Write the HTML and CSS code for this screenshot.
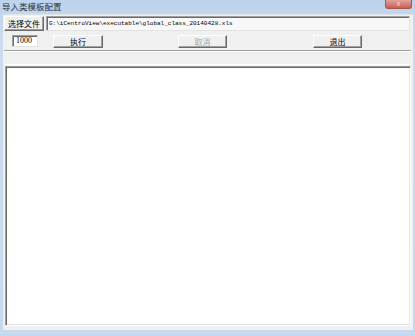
FILE: index.html
```html
<!DOCTYPE html>
<html lang="zh-CN">
<head>
  <meta charset="UTF-8" />
  <title>导入类模板配置</title>
  <link rel="stylesheet" href="styles.css">
</head>
<body>
  <div class="window">
    <div class="titlebar">
      <span class="title">导入类模板配置</span>
      <span class="close">x</span>
    </div>

    <div class="client">
      <div class="row row-file">
        <button class="btn btn-pick">选择文件</button>
        <div class="edit edit-path">G:\iCentroView\executable\global_class_20140428.xls</div>
      </div>

      <div class="row row-actions">
        <div class="edit edit-count">1000</div>
        <button class="btn btn-run">执行</button>
        <button class="btn btn-cancel" disabled>取消</button>
        <button class="btn btn-exit">退出</button>
      </div>

      <div class="status"></div>

      <div class="listbox"></div>
    </div>
  </div>
</body>
</html>
```

FILE: styles.css
```css
body {
  margin: 0;
  font-family: "Noto Sans CJK SC", "Liberation Sans", sans-serif;
}

.window {
  width: 415px;
  height: 336px;
  background: linear-gradient(#bdd3ec, #cbdcef 40px, #c6d9ee);
  display: flex;
  flex-direction: column;
  overflow: hidden;
}

.titlebar {
  height: 14px;
  display: flex;
  align-items: flex-start;
}

.title {
  font-size: 8.5px;
  line-height: 12px;
  color: #28323e;
  margin-left: 2px;
}

.close {
  margin-left: auto;
  margin-right: 3px;
  width: 27px;
  height: 9px;
  background: linear-gradient(#e3a39b, #c85e52);
  border: 1px solid #a4554f;
  border-top: none;
  border-radius: 0 0 3px 3px;
  color: #f6dcdc;
  font-family: "Liberation Sans", sans-serif;
  font-size: 7px;
  line-height: 8px;
  text-align: center;
  box-sizing: border-box;
}

.client {
  flex: 1;
  margin: 0 2px 6px 3px;
  background: #f0f0f0;
  border-top: 1px solid #dfe3e8;
  display: flex;
  flex-direction: column;
}

.row {
  display: flex;
  align-items: flex-start;
}

.row-file {
  margin-top: 1px;
  height: 15px;
}

.row-actions {
  margin-top: 4px;
  height: 14px;
}

.btn {
  padding: 0;
  margin: 0;
  background: #f0f0f0;
  border: 1px solid;
  border-color: #ffffff #696969 #696969 #ffffff;
  box-shadow: inset -1px -1px 0 #a0a0a0;
  font-family: "Noto Sans CJK SC", sans-serif;
  font-size: 8px;
  line-height: 11px;
  color: #000;
  box-sizing: border-box;
}

.btn:disabled {
  color: #a8a8a8;
}

.btn-pick {
  margin-left: 1px;
  width: 40px;
  height: 15px;
}

.btn-run {
  margin-left: 15px;
  width: 50px;
  height: 13px;
}

.btn-cancel {
  margin-left: 75px;
  width: 49px;
  height: 13px;
}

.btn-exit {
  margin-left: 86px;
  width: 49px;
  height: 13px;
}

.edit {
  background: #fff;
  border: 1px solid;
  border-color: #a0a0a0 #e3e3e3 #e3e3e3 #a0a0a0;
  box-shadow: inset 1px 1px 0 #696969;
  box-sizing: border-box;
  white-space: nowrap;
  overflow: hidden;
}

.edit-path {
  margin-left: 2px;
  width: 364px;
  height: 15px;
  font-family: "Liberation Mono", monospace;
  font-size: 6px;
  line-height: 13px;
  padding-left: 2px;
  color: #000;
  background: #f8f8f8;
}

.edit-count {
  margin-left: 9px;
  width: 26px;
  height: 12px;
  font-family: "Liberation Serif", serif;
  font-size: 8px;
  line-height: 10px;
  padding-left: 3px;
  color: #000;
}

.status {
  margin: 1px 2px 0 1px;
  height: 13px;
  border-top: 1px solid #a0a0a0;
  border-bottom: 1px solid #ffffff;
  box-shadow: inset 0 1px 0 #ffffff;
}

.listbox {
  margin: 1px 2px 4px 2px;
  flex: 1;
  background: #fff;
  border: 1px solid;
  border-color: #a0a0a0 #ffffff #ffffff #a0a0a0;
  box-shadow: inset 1px 1px 0 #696969, inset -1px -1px 0 #e3e3e3;
}
```
